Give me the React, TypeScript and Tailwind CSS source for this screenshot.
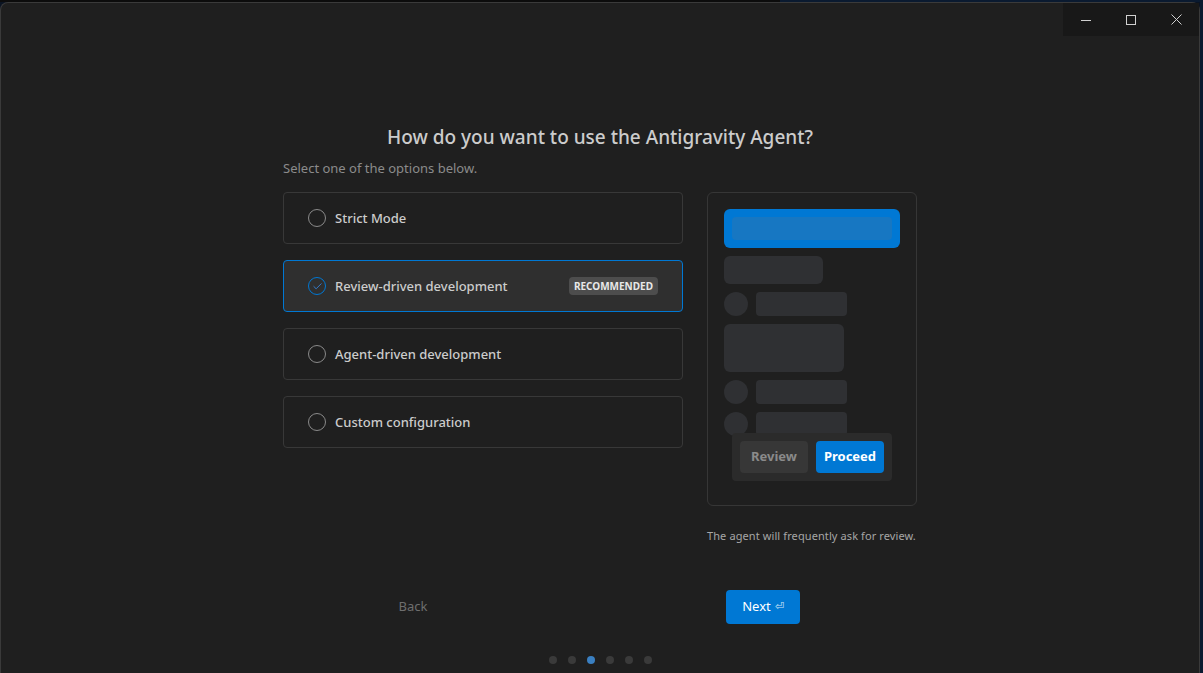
import { Check } from "lucide-react";

const options = [
  { label: "Strict Mode" },
  { label: "Review-driven development", selected: true, badge: "RECOMMENDED" },
  { label: "Agent-driven development" },
  { label: "Custom configuration" },
];

function Radio({ on }: { on?: boolean }) {
  if (on) {
    return (
      <span className="flex h-[18px] w-[18px] items-center justify-center rounded-full border border-[#0078d4]">
        <Check size={11} strokeWidth={1.6} className="text-[#3794ff]" />
      </span>
    );
  }
  return <span className="h-[18px] w-[18px] rounded-full border border-[#8a8a8a]" />;
}

function Preview() {
  return (
    <div className="relative h-[314px] w-[210px] rounded-md border border-[#363636] px-4 pt-4">
      <div className="rounded-md bg-[#0078d4] p-2">
        <div className="h-[23px] rounded bg-[#1777c2]" />
      </div>
      <div className="mt-2 h-7 w-[99px] rounded-md bg-[#2f3033]" />
      <div className="mt-2 flex items-center gap-2">
        <span className="h-6 w-6 rounded-full bg-[#2f3033]" />
        <span className="h-6 w-[91px] rounded bg-[#2f3033]" />
      </div>
      <div className="mt-2 h-12 w-[120px] rounded-md bg-[#2f3033]" />
      <div className="mt-2 flex items-center gap-2">
        <span className="h-6 w-6 rounded-full bg-[#2f3033]" />
        <span className="h-6 w-[91px] rounded bg-[#2f3033]" />
      </div>
      <div className="mt-2 flex items-center gap-2">
        <span className="h-6 w-6 rounded-full bg-[#2f3033]" />
        <span className="h-6 w-[91px] rounded bg-[#2f3033]" />
      </div>
      <div className="absolute left-6 top-[240px] flex gap-2 rounded bg-[#2b2b2b] p-2">
        <span className="flex h-8 w-[68px] items-center justify-center rounded bg-[#373737] text-[13px] font-bold text-[#8a8a8a]">
          Review
        </span>
        <span className="flex h-8 w-[68px] items-center justify-center rounded bg-[#0078d4] text-[13px] font-bold text-white">
          Proceed
        </span>
      </div>
    </div>
  );
}

export default function App() {
  return (
    <div
      className="h-[673px] w-[1203px] overflow-hidden bg-[#0a1322]"
      style={{ fontFamily: '"Noto Sans", "Open Sans", sans-serif' }}
    >
      <div className="flex h-[2px]">
        <div className="w-[780px] bg-[#0c0c0c]" />
        <div className="flex-1 bg-[#0a1a30]" />
      </div>
      <div className="flex">
        <div className="relative h-[671px] w-[1200px] rounded-tl-lg rounded-tr-lg border-l border-r border-t border-[#3a3a3a] bg-[#1f1f1f]">
          {/* window controls */}
          <div className="absolute right-0 top-0 flex h-[33px] bg-[#181818] text-[#d0d0d0]">
            <span className="flex w-[45px] items-center justify-center">
              <svg width="10" height="10" viewBox="0 0 10 10">
                <path d="M0 5.5h10" stroke="currentColor" strokeWidth="1" />
              </svg>
            </span>
            <span className="flex w-[46px] items-center justify-center">
              <svg width="10" height="10" viewBox="0 0 10 10">
                <rect x="0.5" y="0.5" width="9" height="9" fill="none" stroke="currentColor" strokeWidth="1" />
              </svg>
            </span>
            <span className="flex w-[45px] items-center justify-center">
              <svg width="11" height="11" viewBox="0 0 11 11">
                <path d="M0.5 0.5l10 10M10.5 0.5l-10 10" stroke="currentColor" strokeWidth="1" />
              </svg>
            </span>
          </div>

          <div className="flex flex-col items-center pt-[120px]">
            <h1 className="text-[19px] font-medium leading-7 text-[#cccccc]">
              How do you want to use the Antigravity Agent?
            </h1>
            <div className="w-[634px]">
              <p className="mt-[8px] text-[13px] leading-[18px] text-[#8b8b8b]">
                Select one of the options below.
              </p>
              <div className="mt-[15px] flex gap-6">
                <div className="flex w-[400px] flex-col gap-4">
                  {options.map((o) => (
                    <div
                      key={o.label}
                      className={
                        o.selected
                          ? "flex h-[52px] items-center gap-[9px] rounded border border-[#0078d4] bg-[#2f2f2f] pl-6 pr-6"
                          : "flex h-[52px] items-center gap-[9px] rounded border border-[#383838] pl-6 pr-6"
                      }
                    >
                      <Radio on={o.selected} />
                      <span className="pt-[2px] text-[13px] font-medium text-[#cccccc]">{o.label}</span>
                      {o.badge && (
                        <span className="ml-auto rounded-sm bg-[#4d4d4d] px-[5px] py-[2px] text-[10px] font-bold leading-[14px] text-[#e8e8e8]">
                          {o.badge}
                        </span>
                      )}
                    </div>
                  ))}
                </div>
                <div className="flex w-[210px] flex-col">
                  <Preview />
                  <p className="mt-[22px] text-[11px] tracking-[0.1px] text-[#a6a6a6]">
                    The agent will frequently ask for review.
                  </p>
                </div>
              </div>
              <div className="mt-[45px] flex items-center">
                <button className="ml-[93px] h-[34px] w-[74px] text-[13px] text-[#6e6e6e]">Back</button>
                <button className="ml-[276px] flex h-[34px] w-[74px] items-center justify-center gap-1 rounded-sm bg-[#0078d4] text-[13px] text-white">
                  Next <span className="text-[11px] text-[#cfe3f7]">⏎</span>
                </button>
              </div>
            </div>
            <div className="mt-[32px] flex gap-[11px]">
              {[0, 1, 2, 3, 4, 5].map((i) => (
                <span
                  key={i}
                  className={i === 2 ? "h-2 w-2 rounded-full bg-[#3a7fc1]" : "h-2 w-2 rounded-full bg-[#3a3a3a]"}
                />
              ))}
            </div>
          </div>
        </div>
        <div className="flex-1 bg-[#0a1a30]" />
      </div>
    </div>
  );
}
